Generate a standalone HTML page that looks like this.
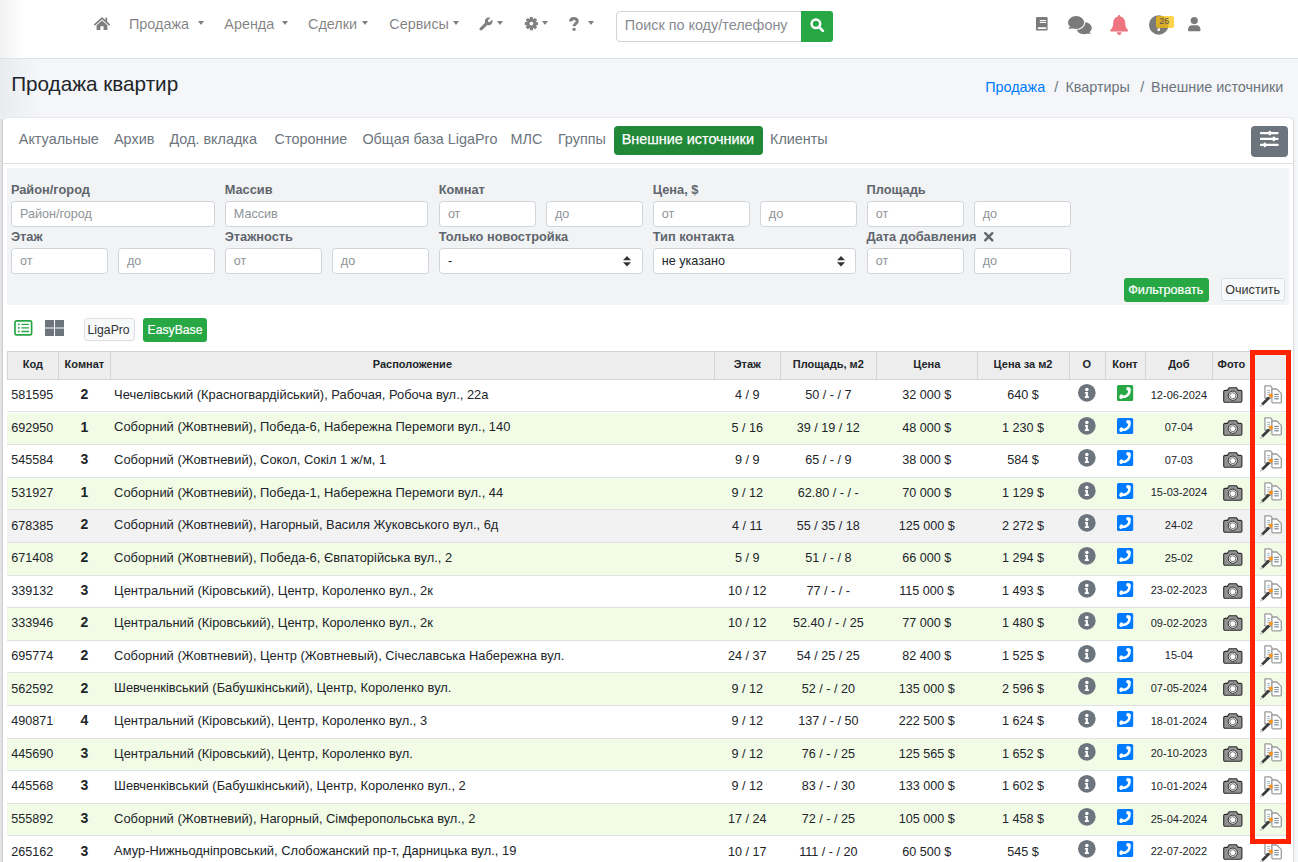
<!DOCTYPE html>
<html><head><meta charset="utf-8"><title>Продажа квартир</title><style>
*{box-sizing:border-box;margin:0;padding:0}
html,body{width:1298px;height:862px;overflow:hidden}
body{background:#f4f6f9;font-family:"Liberation Sans",sans-serif;position:relative;color:#212529}
.a{position:absolute;white-space:nowrap;line-height:1}
.nav{font-size:14.4px;color:rgba(0,0,0,.5)}
.caret{position:absolute;width:0;height:0;border-top:4.3px solid rgba(0,0,0,.5);border-left:3.8px solid transparent;border-right:3.8px solid transparent}
.tab{font-size:14.4px;color:#6c757d}
.lbl{font-size:12.8px;font-weight:bold;color:#5f666d}
.inp{position:absolute;background:#fff;border:1px solid #ced4da;border-radius:3.5px}
.ph{font-size:12.6px;color:#8e9398}
.hd{position:absolute;font-size:11px;font-weight:bold;line-height:1;white-space:nowrap;color:#212529}
svg{position:absolute;overflow:visible}
</style></head><body>
<div class="a" style="left:0;top:0;width:1298px;height:59px;background:#fff;border-bottom:1px solid #dee2e6"></div>
<div class="a" style="left:0;top:0;width:24px;height:58px;background:linear-gradient(to right,#f1f1f2,rgba(255,255,255,0))"></div>
<svg style="left:94.1px;top:17px" width="16" height="13" viewBox="0 0 16 13"><path d="M0.8 7.6 L8 1.2 L15.2 7.6" fill="none" stroke="#7f7f7f" stroke-width="1.7" stroke-linecap="round" stroke-linejoin="round"/><rect x="11.4" y="0.6" width="1.8" height="4.5" fill="#7f7f7f"/><path d="M2.6 8.2 L8 3.4 L13.4 8.2 L13.4 12.9 L9.6 12.9 L9.6 9.2 L6.4 9.2 L6.4 12.9 L2.6 12.9 Z" fill="#7f7f7f"/></svg>
<div class="a nav" style="left:129.0px;top:17.01px">Продажа</div>
<div class="caret" style="left:198.0px;top:21px"></div>
<div class="a nav" style="left:224.3px;top:17.01px">Аренда</div>
<div class="caret" style="left:282.0px;top:21px"></div>
<div class="a nav" style="left:308.0px;top:17.01px">Сделки</div>
<div class="caret" style="left:362.0px;top:21px"></div>
<div class="a nav" style="left:389.3px;top:17.01px">Сервисы</div>
<div class="caret" style="left:452.5px;top:21px"></div>
<svg style="left:478.9px;top:16.9px" width="14" height="14" viewBox="0 0 14 14"><path d="M13.2 2.6 L10.9 4.9 L9.1 4.9 L9.1 3.1 L11.4 0.8 C9.6 0.1 7.6 0.6 6.6 2 C5.8 3.1 5.7 4.5 6.1 5.7 L0.9 10.9 C0.3 11.5 0.3 12.5 0.9 13.1 C1.5 13.7 2.5 13.7 3.1 13.1 L8.3 7.9 C9.5 8.3 10.9 8.2 12 7.4 C13.4 6.4 13.9 4.4 13.2 2.6 Z" fill="#7f7f7f"/></svg>
<div class="caret" style="left:497.3px;top:21px"></div>
<svg style="left:524.5px;top:16.9px" width="13" height="13.2" viewBox="0 0 13 13.2"><rect x="4.800000000000001" y="0.0" width="3.2" height="3.4" rx="0.5" transform="rotate(0 6.4 6.6)" fill="#7f7f7f"/><rect x="4.800000000000001" y="0.0" width="3.2" height="3.4" rx="0.5" transform="rotate(45 6.4 6.6)" fill="#7f7f7f"/><rect x="4.800000000000001" y="0.0" width="3.2" height="3.4" rx="0.5" transform="rotate(90 6.4 6.6)" fill="#7f7f7f"/><rect x="4.800000000000001" y="0.0" width="3.2" height="3.4" rx="0.5" transform="rotate(135 6.4 6.6)" fill="#7f7f7f"/><rect x="4.800000000000001" y="0.0" width="3.2" height="3.4" rx="0.5" transform="rotate(180 6.4 6.6)" fill="#7f7f7f"/><rect x="4.800000000000001" y="0.0" width="3.2" height="3.4" rx="0.5" transform="rotate(225 6.4 6.6)" fill="#7f7f7f"/><rect x="4.800000000000001" y="0.0" width="3.2" height="3.4" rx="0.5" transform="rotate(270 6.4 6.6)" fill="#7f7f7f"/><rect x="4.800000000000001" y="0.0" width="3.2" height="3.4" rx="0.5" transform="rotate(315 6.4 6.6)" fill="#7f7f7f"/><circle cx="6.4" cy="6.6" r="4.9" fill="#7f7f7f"/><circle cx="6.4" cy="6.6" r="1.9" fill="#fff"/></svg>
<div class="caret" style="left:541.5px;top:21px"></div>
<svg style="left:569.1px;top:16.9px" width="9.8" height="13.7" viewBox="0 0 9.8 13.7"><path d="M1.6 4.6 C1.6 2.4 3.1 1.5 4.9 1.5 C6.8 1.5 8.3 2.6 8.3 4.3 C8.3 6.6 5.1 6.7 5.1 9.2" fill="none" stroke="#7f7f7f" stroke-width="3"/><rect x="3.5" y="10.9" width="3.1" height="2.8" rx="0.6" fill="#7f7f7f"/></svg>
<div class="caret" style="left:587.6px;top:21px"></div>
<div class="a" style="left:616px;top:11px;width:185.5px;height:31px;background:#fff;border:1px solid #ced4da;border-radius:4px 0 0 4px"></div>
<div class="a" style="left:624.8px;top:17.51px;font-size:14.4px;color:#878c92">Поиск по коду/телефону</div>
<div class="a" style="left:801px;top:11px;width:32px;height:31px;background:#28a745;border-radius:0 3px 3px 0"></div>
<svg style="left:809.5px;top:17.5px" width="15" height="15" viewBox="0 0 15 15"><circle cx="5.9" cy="5.8" r="4.3" fill="none" stroke="#fff" stroke-width="2.5"/><path d="M9 9 L12.9 12.9" stroke="#fff" stroke-width="2.7" stroke-linecap="round"/></svg>
<svg style="left:1036.2px;top:17px" width="11.6" height="13.5" viewBox="0 0 11.6 13.5"><rect x="0" y="0" width="11.6" height="13.5" rx="1.3" fill="#7a7a7a"/><rect x="3.8" y="3" width="6.2" height="1.1" fill="#fff"/><rect x="3.8" y="4.9" width="6.2" height="1.1" fill="#fff"/><rect x="1.8" y="10.3" width="8.5" height="1.8" rx="0.4" fill="#fff"/></svg>
<svg style="left:1067.5px;top:15.8px" width="24" height="18.5" viewBox="0 0 24 18.5"><ellipse cx="16" cy="12.1" rx="7.8" ry="6.1" fill="#7a7a7a"/><path d="M20.5 15.5 L23.3 18 L17.5 17.2 Z" fill="#7a7a7a"/><ellipse cx="8.1" cy="6.5" rx="9.3" ry="7.6" fill="#fff"/><ellipse cx="8.1" cy="6.5" rx="8.1" ry="6.5" fill="#7a7a7a"/><path d="M2 10.5 L0.3 13 L5.5 12.2 Z" fill="#7a7a7a"/></svg>
<svg style="left:1110.4px;top:15px" width="18.4" height="20" viewBox="0 0 18.4 20"><path d="M9.2 0 C10 0 10.4 0.6 10.4 1.4 C13.4 2 15.2 4.5 15.2 7.6 C15.2 11.5 16 13.3 18 15 C18.4 15.5 18.1 16.4 17.3 16.4 H1.1 C0.3 16.4 0 15.5 0.4 15 C2.4 13.3 3.2 11.5 3.2 7.6 C3.2 4.5 5 2 8 1.4 C8 0.6 8.4 0 9.2 0 Z" fill="#ee7480"/><path d="M6.8 17.3 H11.6 C11.6 18.7 10.5 20 9.2 20 C7.9 20 6.8 18.7 6.8 17.3 Z" fill="#ee7480"/></svg>
<svg style="left:1148.7px;top:15.2px" width="19.5" height="19.8" viewBox="0 0 19.5 19.8"><circle cx="9.75" cy="9.9" r="9.75" fill="#7a7a7a"/><rect x="8.5" y="13.4" width="2.5" height="2.5" fill="#fff"/></svg>
<div class="a" style="left:1156px;top:16.4px;width:18.3px;height:12px;background:rgba(255,193,7,.72);border-radius:2px"></div>
<div class="a" style="left:1159.2px;top:17.2px;font-size:9px;color:#555">26</div>
<svg style="left:1188.2px;top:16.7px" width="12.5" height="14.3" viewBox="0 0 12.5 14.3"><circle cx="6.25" cy="3.6" r="3.6" fill="#7a7a7a"/><path d="M0 12.6 C0 9.8 2 8.3 4 8.3 H8.5 C10.5 8.3 12.5 9.8 12.5 12.6 V13 C12.5 13.7 12 14.3 11.2 14.3 H1.3 C0.5 14.3 0 13.7 0 13 Z" fill="#7a7a7a"/></svg>
<div class="a" style="left:0;top:59px;width:40px;height:58px;background:linear-gradient(to right,#e9ecef,rgba(244,246,249,0))"></div>
<div class="a" style="left:11.2px;top:74.28px;font-size:20.7px;color:#212529">Продажа квартир</div>
<div class="a" style="left:985.2px;top:80.21px;font-size:14.4px;color:#007bff">Продажа</div>
<div class="a" style="left:1054.3px;top:80.21px;font-size:14.4px;color:#6c757d">/</div>
<div class="a" style="left:1065.4px;top:80.21px;font-size:14.4px;color:#6c757d">Квартиры</div>
<div class="a" style="left:1140.2px;top:80.21px;font-size:14.4px;color:#6c757d">/</div>
<div class="a" style="left:1151.1px;top:80.21px;font-size:14.4px;color:#6c757d">Внешние источники</div>
<div class="a" style="left:0;top:118px;width:3px;height:744px;background:#e5e6ea"></div>
<div class="a" style="left:2.5px;top:117.5px;width:1290.6px;height:760px;background:#fff;border-radius:4px;box-shadow:0 0 1px rgba(0,0,0,.25),0 1px 3px rgba(0,0,0,.2)"></div>
<div class="a" style="left:2.5px;top:163px;width:1290.6px;height:1px;background:rgba(0,0,0,.125)"></div>
<div class="a tab" style="left:18.8px;top:132.11px">Актуальные</div>
<div class="a tab" style="left:114.0px;top:132.11px">Архив</div>
<div class="a tab" style="left:169.4px;top:132.11px">Дод. вкладка</div>
<div class="a tab" style="left:274.6px;top:132.11px">Сторонние</div>
<div class="a tab" style="left:362.4px;top:132.11px">Общая база LigaPro</div>
<div class="a tab" style="left:510.5px;top:132.11px">МЛС</div>
<div class="a tab" style="left:557.9px;top:132.11px">Группы</div>
<div class="a tab" style="left:770.0px;top:132.11px">Клиенты</div>
<div class="a" style="left:613.9px;top:126.3px;width:148.8px;height:28.3px;background:#218838;border-radius:4px"></div>
<div class="a" style="left:621.7px;top:132.21px;font-size:14.4px;color:#fff;-webkit-text-stroke:0.25px #fff">Внешние источники</div>
<div class="a" style="left:1250.9px;top:126px;width:36.7px;height:30.6px;background:#6c757d;border-radius:4px"></div>
<svg style="left:1260px;top:131px" width="18.5" height="20" viewBox="0 0 18.5 20"><rect x="0" y="0.9" width="18.5" height="2.3" rx="0.6" fill="#fff"/><rect x="8.6" y="-0.3" width="2.4" height="4.7" rx="1.1" fill="#fff"/><rect x="0" y="6.8" width="18.5" height="2.3" rx="0.6" fill="#fff"/><rect x="12.6" y="5.6" width="2.4" height="4.7" rx="1.1" fill="#fff"/><rect x="0" y="12.7" width="18.5" height="2.3" rx="0.6" fill="#fff"/><rect x="3.6" y="11.5" width="2.4" height="4.7" rx="1.1" fill="#fff"/></svg>
<div class="a" style="left:6.7px;top:168px;width:1282.2px;height:136.8px;background:#f2f3f5"></div>
<div class="a lbl" style="left:10.9px;top:184.33px">Район/город</div>
<div class="a lbl" style="left:224.70000000000002px;top:184.33px">Массив</div>
<div class="a lbl" style="left:438.79999999999995px;top:184.33px">Комнат</div>
<div class="a lbl" style="left:652.6999999999999px;top:184.33px">Цена, $</div>
<div class="a lbl" style="left:866.6px;top:184.33px">Площадь</div>
<div class="a lbl" style="left:10.9px;top:231.33px">Этаж</div>
<div class="a lbl" style="left:224.70000000000002px;top:231.33px">Этажность</div>
<div class="a lbl" style="left:438.79999999999995px;top:231.33px">Только новостройка</div>
<div class="a lbl" style="left:652.6999999999999px;top:231.33px">Тип контакта</div>
<div class="a lbl" style="left:866.6px;top:231.33px">Дата добавления</div>
<svg style="left:984px;top:231.6px" width="9.5" height="9.5" viewBox="0 0 9.5 9.5"><path d="M1.2 1.2 L8.3 8.3 M8.3 1.2 L1.2 8.3" stroke="#5f666d" stroke-width="2.4" stroke-linecap="round"/></svg>
<div class="inp" style="left:10.9px;top:201.3px;width:203.8px;height:26.0px"></div>
<div class="a ph" style="left:20.0px;top:208.33px;color:#8e9398">Район/город</div>
<div class="inp" style="left:224.70000000000002px;top:201.3px;width:203.8px;height:26.0px"></div>
<div class="a ph" style="left:233.8px;top:208.33px;color:#8e9398">Массив</div>
<div class="inp" style="left:438.79999999999995px;top:201.3px;width:97.0px;height:26.0px"></div>
<div class="a ph" style="left:447.9px;top:208.33px;color:#8e9398">от</div>
<div class="inp" style="left:545.8px;top:201.3px;width:97.0px;height:26.0px"></div>
<div class="a ph" style="left:554.9px;top:208.33px;color:#8e9398">до</div>
<div class="inp" style="left:652.6999999999999px;top:201.3px;width:97.0px;height:26.0px"></div>
<div class="a ph" style="left:661.8px;top:208.33px;color:#8e9398">от</div>
<div class="inp" style="left:759.6999999999999px;top:201.3px;width:97.0px;height:26.0px"></div>
<div class="a ph" style="left:768.8px;top:208.33px;color:#8e9398">до</div>
<div class="inp" style="left:866.6px;top:201.3px;width:97.0px;height:26.0px"></div>
<div class="a ph" style="left:875.7px;top:208.33px;color:#8e9398">от</div>
<div class="inp" style="left:973.6px;top:201.3px;width:97.0px;height:26.0px"></div>
<div class="a ph" style="left:982.7px;top:208.33px;color:#8e9398">до</div>
<div class="inp" style="left:10.9px;top:248.2px;width:97.0px;height:26.0px"></div>
<div class="a ph" style="left:20.0px;top:255.33px;color:#8e9398">от</div>
<div class="inp" style="left:117.9px;top:248.2px;width:97.0px;height:26.0px"></div>
<div class="a ph" style="left:127.0px;top:255.33px;color:#8e9398">до</div>
<div class="inp" style="left:224.70000000000002px;top:248.2px;width:97.0px;height:26.0px"></div>
<div class="a ph" style="left:233.8px;top:255.33px;color:#8e9398">от</div>
<div class="inp" style="left:331.7px;top:248.2px;width:97.0px;height:26.0px"></div>
<div class="a ph" style="left:340.8px;top:255.33px;color:#8e9398">до</div>
<div class="inp" style="left:866.6px;top:248.2px;width:97.0px;height:26.0px"></div>
<div class="a ph" style="left:875.7px;top:255.33px;color:#8e9398">от</div>
<div class="inp" style="left:973.6px;top:248.2px;width:97.0px;height:26.0px"></div>
<div class="a ph" style="left:982.7px;top:255.33px;color:#8e9398">до</div>
<div class="inp" style="left:438.79999999999995px;top:248.2px;width:203.8px;height:26.0px"></div>
<div class="a ph" style="left:447.9px;top:255.33px;color:#212529">-</div>
<div class="inp" style="left:652.6999999999999px;top:248.2px;width:203.8px;height:26.0px"></div>
<div class="a ph" style="left:661.8px;top:255.33px;color:#212529">не указано</div>
<svg style="left:623.3px;top:255.8px" width="8" height="10.4" viewBox="0 0 8 10.4"><path d="M0 4.2 L4 0 L8 4.2 Z M0 6.2 L4 10.4 L8 6.2 Z" fill="#333"/></svg>
<svg style="left:837.1999999999999px;top:255.8px" width="8" height="10.4" viewBox="0 0 8 10.4"><path d="M0 4.2 L4 0 L8 4.2 Z M0 6.2 L4 10.4 L8 6.2 Z" fill="#333"/></svg>
<div class="a" style="left:1124px;top:278px;width:85px;height:23.6px;background:#28a745;border-radius:3px"></div>
<div class="a" style="left:1128.3px;top:283.83px;font-size:12.6px;color:#fff;-webkit-text-stroke:0.2px #fff">Фильтровать</div>
<div class="a" style="left:1221px;top:278.2px;width:63.5px;height:23.3px;background:#f8f9fa;border:1px solid #dcdfe2;border-radius:3px"></div>
<div class="a" style="left:1225.2px;top:283.83px;font-size:12.6px;color:#333">Очистить</div>
<svg style="left:14.4px;top:320px" width="18.6" height="15.7" viewBox="0 0 18.6 15.7"><rect x="1" y="0.8" width="16.6" height="14.1" rx="1.5" fill="none" stroke="#28a745" stroke-width="1.7"/><circle cx="4.8" cy="4.4" r="0.95" fill="#28a745"/><rect x="7.3" y="3.7" width="7.8" height="1.4" rx="0.6" fill="#28a745"/><circle cx="4.8" cy="7.9" r="0.95" fill="#28a745"/><rect x="7.3" y="7.2" width="7.8" height="1.4" rx="0.6" fill="#28a745"/><circle cx="4.8" cy="11.5" r="0.95" fill="#28a745"/><rect x="7.3" y="10.8" width="7.8" height="1.4" rx="0.6" fill="#28a745"/></svg>
<svg style="left:45px;top:320px" width="19" height="16" viewBox="0 0 19 16"><rect x="0" y="0" width="9" height="7.5" fill="#6c757d"/><rect x="10" y="0" width="9" height="7.5" fill="#6c757d"/><rect x="0" y="8.5" width="9" height="7.5" fill="#6c757d"/><rect x="10" y="8.5" width="9" height="7.5" fill="#6c757d"/></svg>
<div class="a" style="left:84.3px;top:318.3px;width:50.5px;height:23.1px;background:#f8f9fa;border:1px solid #dcdfe2;border-radius:3px"></div>
<div class="a" style="left:87.6px;top:323.77px;font-size:12.2px;color:#333">LigaPro</div>
<div class="a" style="left:143px;top:318px;width:64px;height:23.9px;background:#28a745;border-radius:3px"></div>
<div class="a" style="left:147.6px;top:323.77px;font-size:12.2px;color:#fff;-webkit-text-stroke:0.2px #fff">EasyBase</div>
<div class="a" style="left:7.4px;top:351.0px;width:1281.1999999999998px;height:29.30000000000001px;background:#ededed;border-top:1px solid #d4d4d4;border-bottom:1px solid #d4d4d4"></div>
<div class="a" style="left:7.4px;top:351.0px;width:1px;height:29.30000000000001px;background:#d4d4d4"></div>
<div class="a" style="left:58.4px;top:351.0px;width:1px;height:29.30000000000001px;background:#d4d4d4"></div>
<div class="a" style="left:110.4px;top:351.0px;width:1px;height:29.30000000000001px;background:#d4d4d4"></div>
<div class="a" style="left:714.4px;top:351.0px;width:1px;height:29.30000000000001px;background:#d4d4d4"></div>
<div class="a" style="left:780.3px;top:351.0px;width:1px;height:29.30000000000001px;background:#d4d4d4"></div>
<div class="a" style="left:876.3px;top:351.0px;width:1px;height:29.30000000000001px;background:#d4d4d4"></div>
<div class="a" style="left:977.3px;top:351.0px;width:1px;height:29.30000000000001px;background:#d4d4d4"></div>
<div class="a" style="left:1068.8px;top:351.0px;width:1px;height:29.30000000000001px;background:#d4d4d4"></div>
<div class="a" style="left:1104.6px;top:351.0px;width:1px;height:29.30000000000001px;background:#d4d4d4"></div>
<div class="a" style="left:1145.4px;top:351.0px;width:1px;height:29.30000000000001px;background:#d4d4d4"></div>
<div class="a" style="left:1212.4px;top:351.0px;width:1px;height:29.30000000000001px;background:#d4d4d4"></div>
<div class="a" style="left:1250.5px;top:351.0px;width:1px;height:29.30000000000001px;background:#d4d4d4"></div>
<div class="a" style="left:1288.6px;top:351.0px;width:1px;height:29.30000000000001px;background:#d4d4d4"></div>
<div class="hd" style="left:-27.1px;width:120px;text-align:center;top:359.29px">Код</div>
<div class="hd" style="left:24.400000000000006px;width:120px;text-align:center;top:359.29px">Комнат</div>
<div class="hd" style="left:352.4px;width:120px;text-align:center;top:359.29px">Расположение</div>
<div class="hd" style="left:687.3499999999999px;width:120px;text-align:center;top:359.29px">Этаж</div>
<div class="hd" style="left:768.3px;width:120px;text-align:center;top:359.29px">Площадь, м2</div>
<div class="hd" style="left:866.8px;width:120px;text-align:center;top:359.29px">Цена</div>
<div class="hd" style="left:963.05px;width:120px;text-align:center;top:359.29px">Цена за м2</div>
<div class="hd" style="left:1026.6999999999998px;width:120px;text-align:center;top:359.29px">О</div>
<div class="hd" style="left:1065.0px;width:120px;text-align:center;top:359.29px">Конт</div>
<div class="hd" style="left:1118.9px;width:120px;text-align:center;top:359.29px">Доб</div>
<div class="hd" style="left:1171.45px;width:120px;text-align:center;top:359.29px">Фото</div>
<div class="a" style="left:7.4px;top:380.30px;width:1281.1999999999998px;height:32.20px;background:#ffffff;border-bottom:1px solid #dee2e6"></div>
<div class="a" style="left:11.3px;top:389.13px;font-size:12.6px">581595</div>
<div class="a" style="left:64.4px;width:40px;text-align:center;top:387.05px;font-size:14px;font-weight:bold">2</div>
<div class="a" style="left:114.1px;top:388.88px;font-size:12.9px">Чечелівський (Красногвардійський), Рабочая, Робоча вул., 22а</div>
<div class="a" style="left:687.3499999999999px;width:120px;text-align:center;top:389.13px;font-size:12.6px">4 / 9</div>
<div class="a" style="left:768.3px;width:120px;text-align:center;top:389.13px;font-size:12.6px">50 / - / 7</div>
<div class="a" style="left:866.8px;width:120px;text-align:center;top:389.13px;font-size:12.6px">32 000 $</div>
<div class="a" style="left:963.05px;width:120px;text-align:center;top:389.13px;font-size:12.6px">640 $</div>
<div class="a" style="left:1128.9px;width:100px;text-align:center;top:389.59px;font-size:11px">12-06-2024</div>
<svg style="left:1077.8px;top:383.90px" width="17.7" height="17.7" viewBox="0 0 17.7 17.7"><circle cx="8.85" cy="8.85" r="8.85" fill="#6c757d"/><circle cx="8.85" cy="5.4" r="1.75" fill="#fff"/><path d="M6.9 7.9 H9.9 V12.3 H10.9 V13.9 H6.8 V12.3 H7.8 V9.4 H6.9 Z" fill="#fff"/></svg>
<svg style="left:1117px;top:384.90px" width="16.2" height="16" viewBox="0 0 16.2 16"><rect width="16.2" height="16" rx="1.6" fill="#28a745"/><path d="M12.2 4.2 C13.3 8.6 10.2 12.3 4.6 12.1" fill="none" stroke="#fff" stroke-width="2.5" stroke-linecap="round"/><ellipse cx="11.5" cy="4.0" rx="2.4" ry="1.8" transform="rotate(25 11.5 4)" fill="#fff"/><ellipse cx="4.2" cy="11.6" rx="1.8" ry="2.3" transform="rotate(25 4.2 11.6)" fill="#fff"/></svg>
<svg style="left:1223.1px;top:387.0px" width="19.6" height="16" viewBox="0 0 19.6 16"><path d="M6.1 0.7 H13.5 L15.1 3.4 H17.6 C18.4 3.4 18.9 4 18.9 4.8 V13.8 C18.9 14.6 18.4 15.2 17.6 15.2 H2 C1.2 15.2 0.7 14.6 0.7 13.8 V4.8 C0.7 4 1.2 3.4 2 3.4 H4.5 Z" fill="#929292" stroke="#2a2a2a" stroke-width="1.1" stroke-linejoin="round"/><circle cx="9.8" cy="8.7" r="4.6" fill="#fff" stroke="#2a2a2a" stroke-width="1"/><circle cx="9.8" cy="8.7" r="3" fill="#fff" stroke="#444" stroke-width="0.75"/></svg>
<svg style="left:1260px;top:384.6px" width="22" height="22" viewBox="0 0 22 22"><path d="M4.9 0.8 H10.3 L12 2.6 V13 H4.9 Z" fill="#fff" stroke="#9c9c9c" stroke-width="1.3" stroke-linejoin="round"/><path d="M11.9 4 H16.7 L21.3 8.4 V16.8 C21.3 17.4 20.9 17.8 20.3 17.8 H12.9 C12.3 17.8 11.9 17.4 11.9 16.8 Z" fill="#fff" stroke="#9c9c9c" stroke-width="1.3" stroke-linejoin="round"/><rect x="7.2" y="4.9" width="2.8" height="1.1" fill="#a9b6bf"/><rect x="7.2" y="6.9" width="2.8" height="1.1" fill="#a9c4d6"/><rect x="7.2" y="8.9" width="2.8" height="1.1" fill="#a9b6bf"/><rect x="14.2" y="8.8" width="4.6" height="1.2" fill="#7d8a96"/><rect x="14.2" y="11" width="4.6" height="1.2" fill="#8fa3b3"/><rect x="14.2" y="13.2" width="4.6" height="1.2" fill="#7d8a96"/><circle cx="10.9" cy="10.6" r="2.1" fill="#f7931e"/><path d="M8.1 11.4 L10.2 13.5 L3.2 20.2 L0.2 21.4 L1.3 18.4 Z" fill="#3c3c3c"/><path d="M1.3 18.4 L3.2 20.2 L0.2 21.4 Z" fill="#e6e6e6"/></svg>
<div class="a" style="left:7.4px;top:412.50px;width:1281.1999999999998px;height:32.61px;background:#f1fbe6;border-bottom:1px solid #dee2e6"></div>
<div class="a" style="left:11.3px;top:421.74px;font-size:12.6px">692950</div>
<div class="a" style="left:64.4px;width:40px;text-align:center;top:419.66px;font-size:14px;font-weight:bold">1</div>
<div class="a" style="left:114.1px;top:421.49px;font-size:12.9px">Соборний (Жовтневий), Победа-6, Набережна Перемоги вул., 140</div>
<div class="a" style="left:687.3499999999999px;width:120px;text-align:center;top:421.74px;font-size:12.6px">5 / 16</div>
<div class="a" style="left:768.3px;width:120px;text-align:center;top:421.74px;font-size:12.6px">39 / 19 / 12</div>
<div class="a" style="left:866.8px;width:120px;text-align:center;top:421.74px;font-size:12.6px">48 000 $</div>
<div class="a" style="left:963.05px;width:120px;text-align:center;top:421.74px;font-size:12.6px">1 230 $</div>
<div class="a" style="left:1128.9px;width:100px;text-align:center;top:422.20px;font-size:11px">07-04</div>
<svg style="left:1077.8px;top:416.51px" width="17.7" height="17.7" viewBox="0 0 17.7 17.7"><circle cx="8.85" cy="8.85" r="8.85" fill="#6c757d"/><circle cx="8.85" cy="5.4" r="1.75" fill="#fff"/><path d="M6.9 7.9 H9.9 V12.3 H10.9 V13.9 H6.8 V12.3 H7.8 V9.4 H6.9 Z" fill="#fff"/></svg>
<svg style="left:1117px;top:417.51px" width="16.2" height="16" viewBox="0 0 16.2 16"><rect width="16.2" height="16" rx="1.6" fill="#007bff"/><path d="M12.2 4.2 C13.3 8.6 10.2 12.3 4.6 12.1" fill="none" stroke="#fff" stroke-width="2.5" stroke-linecap="round"/><ellipse cx="11.5" cy="4.0" rx="2.4" ry="1.8" transform="rotate(25 11.5 4)" fill="#fff"/><ellipse cx="4.2" cy="11.6" rx="1.8" ry="2.3" transform="rotate(25 4.2 11.6)" fill="#fff"/></svg>
<svg style="left:1223.1px;top:419.61px" width="19.6" height="16" viewBox="0 0 19.6 16"><path d="M6.1 0.7 H13.5 L15.1 3.4 H17.6 C18.4 3.4 18.9 4 18.9 4.8 V13.8 C18.9 14.6 18.4 15.2 17.6 15.2 H2 C1.2 15.2 0.7 14.6 0.7 13.8 V4.8 C0.7 4 1.2 3.4 2 3.4 H4.5 Z" fill="#929292" stroke="#2a2a2a" stroke-width="1.1" stroke-linejoin="round"/><circle cx="9.8" cy="8.7" r="4.6" fill="#fff" stroke="#2a2a2a" stroke-width="1"/><circle cx="9.8" cy="8.7" r="3" fill="#fff" stroke="#444" stroke-width="0.75"/></svg>
<svg style="left:1260px;top:417.21000000000004px" width="22" height="22" viewBox="0 0 22 22"><path d="M4.9 0.8 H10.3 L12 2.6 V13 H4.9 Z" fill="#fff" stroke="#9c9c9c" stroke-width="1.3" stroke-linejoin="round"/><path d="M11.9 4 H16.7 L21.3 8.4 V16.8 C21.3 17.4 20.9 17.8 20.3 17.8 H12.9 C12.3 17.8 11.9 17.4 11.9 16.8 Z" fill="#fff" stroke="#9c9c9c" stroke-width="1.3" stroke-linejoin="round"/><rect x="7.2" y="4.9" width="2.8" height="1.1" fill="#a9b6bf"/><rect x="7.2" y="6.9" width="2.8" height="1.1" fill="#a9c4d6"/><rect x="7.2" y="8.9" width="2.8" height="1.1" fill="#a9b6bf"/><rect x="14.2" y="8.8" width="4.6" height="1.2" fill="#7d8a96"/><rect x="14.2" y="11" width="4.6" height="1.2" fill="#8fa3b3"/><rect x="14.2" y="13.2" width="4.6" height="1.2" fill="#7d8a96"/><circle cx="10.9" cy="10.6" r="2.1" fill="#f7931e"/><path d="M8.1 11.4 L10.2 13.5 L3.2 20.2 L0.2 21.4 L1.3 18.4 Z" fill="#3c3c3c"/><path d="M1.3 18.4 L3.2 20.2 L0.2 21.4 Z" fill="#e6e6e6"/></svg>
<div class="a" style="left:7.4px;top:445.11px;width:1281.1999999999998px;height:32.61px;background:#ffffff;border-bottom:1px solid #dee2e6"></div>
<div class="a" style="left:11.3px;top:454.35px;font-size:12.6px">545584</div>
<div class="a" style="left:64.4px;width:40px;text-align:center;top:452.27px;font-size:14px;font-weight:bold">3</div>
<div class="a" style="left:114.1px;top:454.10px;font-size:12.9px">Соборний (Жовтневий), Сокол, Сокіл 1 ж/м, 1</div>
<div class="a" style="left:687.3499999999999px;width:120px;text-align:center;top:454.35px;font-size:12.6px">9 / 9</div>
<div class="a" style="left:768.3px;width:120px;text-align:center;top:454.35px;font-size:12.6px">65 / - / 9</div>
<div class="a" style="left:866.8px;width:120px;text-align:center;top:454.35px;font-size:12.6px">38 000 $</div>
<div class="a" style="left:963.05px;width:120px;text-align:center;top:454.35px;font-size:12.6px">584 $</div>
<div class="a" style="left:1128.9px;width:100px;text-align:center;top:454.81px;font-size:11px">07-03</div>
<svg style="left:1077.8px;top:449.12px" width="17.7" height="17.7" viewBox="0 0 17.7 17.7"><circle cx="8.85" cy="8.85" r="8.85" fill="#6c757d"/><circle cx="8.85" cy="5.4" r="1.75" fill="#fff"/><path d="M6.9 7.9 H9.9 V12.3 H10.9 V13.9 H6.8 V12.3 H7.8 V9.4 H6.9 Z" fill="#fff"/></svg>
<svg style="left:1117px;top:450.12px" width="16.2" height="16" viewBox="0 0 16.2 16"><rect width="16.2" height="16" rx="1.6" fill="#007bff"/><path d="M12.2 4.2 C13.3 8.6 10.2 12.3 4.6 12.1" fill="none" stroke="#fff" stroke-width="2.5" stroke-linecap="round"/><ellipse cx="11.5" cy="4.0" rx="2.4" ry="1.8" transform="rotate(25 11.5 4)" fill="#fff"/><ellipse cx="4.2" cy="11.6" rx="1.8" ry="2.3" transform="rotate(25 4.2 11.6)" fill="#fff"/></svg>
<svg style="left:1223.1px;top:452.22px" width="19.6" height="16" viewBox="0 0 19.6 16"><path d="M6.1 0.7 H13.5 L15.1 3.4 H17.6 C18.4 3.4 18.9 4 18.9 4.8 V13.8 C18.9 14.6 18.4 15.2 17.6 15.2 H2 C1.2 15.2 0.7 14.6 0.7 13.8 V4.8 C0.7 4 1.2 3.4 2 3.4 H4.5 Z" fill="#929292" stroke="#2a2a2a" stroke-width="1.1" stroke-linejoin="round"/><circle cx="9.8" cy="8.7" r="4.6" fill="#fff" stroke="#2a2a2a" stroke-width="1"/><circle cx="9.8" cy="8.7" r="3" fill="#fff" stroke="#444" stroke-width="0.75"/></svg>
<svg style="left:1260px;top:449.82000000000005px" width="22" height="22" viewBox="0 0 22 22"><path d="M4.9 0.8 H10.3 L12 2.6 V13 H4.9 Z" fill="#fff" stroke="#9c9c9c" stroke-width="1.3" stroke-linejoin="round"/><path d="M11.9 4 H16.7 L21.3 8.4 V16.8 C21.3 17.4 20.9 17.8 20.3 17.8 H12.9 C12.3 17.8 11.9 17.4 11.9 16.8 Z" fill="#fff" stroke="#9c9c9c" stroke-width="1.3" stroke-linejoin="round"/><rect x="7.2" y="4.9" width="2.8" height="1.1" fill="#a9b6bf"/><rect x="7.2" y="6.9" width="2.8" height="1.1" fill="#a9c4d6"/><rect x="7.2" y="8.9" width="2.8" height="1.1" fill="#a9b6bf"/><rect x="14.2" y="8.8" width="4.6" height="1.2" fill="#7d8a96"/><rect x="14.2" y="11" width="4.6" height="1.2" fill="#8fa3b3"/><rect x="14.2" y="13.2" width="4.6" height="1.2" fill="#7d8a96"/><circle cx="10.9" cy="10.6" r="2.1" fill="#f7931e"/><path d="M8.1 11.4 L10.2 13.5 L3.2 20.2 L0.2 21.4 L1.3 18.4 Z" fill="#3c3c3c"/><path d="M1.3 18.4 L3.2 20.2 L0.2 21.4 Z" fill="#e6e6e6"/></svg>
<div class="a" style="left:7.4px;top:477.72px;width:1281.1999999999998px;height:32.61px;background:#f1fbe6;border-bottom:1px solid #dee2e6"></div>
<div class="a" style="left:11.3px;top:486.96px;font-size:12.6px">531927</div>
<div class="a" style="left:64.4px;width:40px;text-align:center;top:484.88px;font-size:14px;font-weight:bold">1</div>
<div class="a" style="left:114.1px;top:486.71px;font-size:12.9px">Соборний (Жовтневий), Победа-1, Набережна Перемоги вул., 44</div>
<div class="a" style="left:687.3499999999999px;width:120px;text-align:center;top:486.96px;font-size:12.6px">9 / 12</div>
<div class="a" style="left:768.3px;width:120px;text-align:center;top:486.96px;font-size:12.6px">62.80 / - / -</div>
<div class="a" style="left:866.8px;width:120px;text-align:center;top:486.96px;font-size:12.6px">70 000 $</div>
<div class="a" style="left:963.05px;width:120px;text-align:center;top:486.96px;font-size:12.6px">1 129 $</div>
<div class="a" style="left:1128.9px;width:100px;text-align:center;top:487.42px;font-size:11px">15-03-2024</div>
<svg style="left:1077.8px;top:481.73px" width="17.7" height="17.7" viewBox="0 0 17.7 17.7"><circle cx="8.85" cy="8.85" r="8.85" fill="#6c757d"/><circle cx="8.85" cy="5.4" r="1.75" fill="#fff"/><path d="M6.9 7.9 H9.9 V12.3 H10.9 V13.9 H6.8 V12.3 H7.8 V9.4 H6.9 Z" fill="#fff"/></svg>
<svg style="left:1117px;top:482.73px" width="16.2" height="16" viewBox="0 0 16.2 16"><rect width="16.2" height="16" rx="1.6" fill="#007bff"/><path d="M12.2 4.2 C13.3 8.6 10.2 12.3 4.6 12.1" fill="none" stroke="#fff" stroke-width="2.5" stroke-linecap="round"/><ellipse cx="11.5" cy="4.0" rx="2.4" ry="1.8" transform="rotate(25 11.5 4)" fill="#fff"/><ellipse cx="4.2" cy="11.6" rx="1.8" ry="2.3" transform="rotate(25 4.2 11.6)" fill="#fff"/></svg>
<svg style="left:1223.1px;top:484.83px" width="19.6" height="16" viewBox="0 0 19.6 16"><path d="M6.1 0.7 H13.5 L15.1 3.4 H17.6 C18.4 3.4 18.9 4 18.9 4.8 V13.8 C18.9 14.6 18.4 15.2 17.6 15.2 H2 C1.2 15.2 0.7 14.6 0.7 13.8 V4.8 C0.7 4 1.2 3.4 2 3.4 H4.5 Z" fill="#929292" stroke="#2a2a2a" stroke-width="1.1" stroke-linejoin="round"/><circle cx="9.8" cy="8.7" r="4.6" fill="#fff" stroke="#2a2a2a" stroke-width="1"/><circle cx="9.8" cy="8.7" r="3" fill="#fff" stroke="#444" stroke-width="0.75"/></svg>
<svg style="left:1260px;top:482.43px" width="22" height="22" viewBox="0 0 22 22"><path d="M4.9 0.8 H10.3 L12 2.6 V13 H4.9 Z" fill="#fff" stroke="#9c9c9c" stroke-width="1.3" stroke-linejoin="round"/><path d="M11.9 4 H16.7 L21.3 8.4 V16.8 C21.3 17.4 20.9 17.8 20.3 17.8 H12.9 C12.3 17.8 11.9 17.4 11.9 16.8 Z" fill="#fff" stroke="#9c9c9c" stroke-width="1.3" stroke-linejoin="round"/><rect x="7.2" y="4.9" width="2.8" height="1.1" fill="#a9b6bf"/><rect x="7.2" y="6.9" width="2.8" height="1.1" fill="#a9c4d6"/><rect x="7.2" y="8.9" width="2.8" height="1.1" fill="#a9b6bf"/><rect x="14.2" y="8.8" width="4.6" height="1.2" fill="#7d8a96"/><rect x="14.2" y="11" width="4.6" height="1.2" fill="#8fa3b3"/><rect x="14.2" y="13.2" width="4.6" height="1.2" fill="#7d8a96"/><circle cx="10.9" cy="10.6" r="2.1" fill="#f7931e"/><path d="M8.1 11.4 L10.2 13.5 L3.2 20.2 L0.2 21.4 L1.3 18.4 Z" fill="#3c3c3c"/><path d="M1.3 18.4 L3.2 20.2 L0.2 21.4 Z" fill="#e6e6e6"/></svg>
<div class="a" style="left:7.4px;top:510.33px;width:1281.1999999999998px;height:32.61px;background:#f2f2f3;border-bottom:1px solid #dee2e6"></div>
<div class="a" style="left:11.3px;top:519.57px;font-size:12.6px">678385</div>
<div class="a" style="left:64.4px;width:40px;text-align:center;top:517.49px;font-size:14px;font-weight:bold">2</div>
<div class="a" style="left:114.1px;top:519.32px;font-size:12.9px">Соборний (Жовтневий), Нагорный, Василя Жуковського вул., 6д</div>
<div class="a" style="left:687.3499999999999px;width:120px;text-align:center;top:519.57px;font-size:12.6px">4 / 11</div>
<div class="a" style="left:768.3px;width:120px;text-align:center;top:519.57px;font-size:12.6px">55 / 35 / 18</div>
<div class="a" style="left:866.8px;width:120px;text-align:center;top:519.57px;font-size:12.6px">125 000 $</div>
<div class="a" style="left:963.05px;width:120px;text-align:center;top:519.57px;font-size:12.6px">2 272 $</div>
<div class="a" style="left:1128.9px;width:100px;text-align:center;top:520.03px;font-size:11px">24-02</div>
<svg style="left:1077.8px;top:514.34px" width="17.7" height="17.7" viewBox="0 0 17.7 17.7"><circle cx="8.85" cy="8.85" r="8.85" fill="#6c757d"/><circle cx="8.85" cy="5.4" r="1.75" fill="#fff"/><path d="M6.9 7.9 H9.9 V12.3 H10.9 V13.9 H6.8 V12.3 H7.8 V9.4 H6.9 Z" fill="#fff"/></svg>
<svg style="left:1117px;top:515.34px" width="16.2" height="16" viewBox="0 0 16.2 16"><rect width="16.2" height="16" rx="1.6" fill="#007bff"/><path d="M12.2 4.2 C13.3 8.6 10.2 12.3 4.6 12.1" fill="none" stroke="#fff" stroke-width="2.5" stroke-linecap="round"/><ellipse cx="11.5" cy="4.0" rx="2.4" ry="1.8" transform="rotate(25 11.5 4)" fill="#fff"/><ellipse cx="4.2" cy="11.6" rx="1.8" ry="2.3" transform="rotate(25 4.2 11.6)" fill="#fff"/></svg>
<svg style="left:1223.1px;top:517.44px" width="19.6" height="16" viewBox="0 0 19.6 16"><path d="M6.1 0.7 H13.5 L15.1 3.4 H17.6 C18.4 3.4 18.9 4 18.9 4.8 V13.8 C18.9 14.6 18.4 15.2 17.6 15.2 H2 C1.2 15.2 0.7 14.6 0.7 13.8 V4.8 C0.7 4 1.2 3.4 2 3.4 H4.5 Z" fill="#929292" stroke="#2a2a2a" stroke-width="1.1" stroke-linejoin="round"/><circle cx="9.8" cy="8.7" r="4.6" fill="#fff" stroke="#2a2a2a" stroke-width="1"/><circle cx="9.8" cy="8.7" r="3" fill="#fff" stroke="#444" stroke-width="0.75"/></svg>
<svg style="left:1260px;top:515.0400000000001px" width="22" height="22" viewBox="0 0 22 22"><path d="M4.9 0.8 H10.3 L12 2.6 V13 H4.9 Z" fill="#fff" stroke="#9c9c9c" stroke-width="1.3" stroke-linejoin="round"/><path d="M11.9 4 H16.7 L21.3 8.4 V16.8 C21.3 17.4 20.9 17.8 20.3 17.8 H12.9 C12.3 17.8 11.9 17.4 11.9 16.8 Z" fill="#fff" stroke="#9c9c9c" stroke-width="1.3" stroke-linejoin="round"/><rect x="7.2" y="4.9" width="2.8" height="1.1" fill="#a9b6bf"/><rect x="7.2" y="6.9" width="2.8" height="1.1" fill="#a9c4d6"/><rect x="7.2" y="8.9" width="2.8" height="1.1" fill="#a9b6bf"/><rect x="14.2" y="8.8" width="4.6" height="1.2" fill="#7d8a96"/><rect x="14.2" y="11" width="4.6" height="1.2" fill="#8fa3b3"/><rect x="14.2" y="13.2" width="4.6" height="1.2" fill="#7d8a96"/><circle cx="10.9" cy="10.6" r="2.1" fill="#f7931e"/><path d="M8.1 11.4 L10.2 13.5 L3.2 20.2 L0.2 21.4 L1.3 18.4 Z" fill="#3c3c3c"/><path d="M1.3 18.4 L3.2 20.2 L0.2 21.4 Z" fill="#e6e6e6"/></svg>
<div class="a" style="left:7.4px;top:542.94px;width:1281.1999999999998px;height:32.61px;background:#f1fbe6;border-bottom:1px solid #dee2e6"></div>
<div class="a" style="left:11.3px;top:552.18px;font-size:12.6px">671408</div>
<div class="a" style="left:64.4px;width:40px;text-align:center;top:550.10px;font-size:14px;font-weight:bold">2</div>
<div class="a" style="left:114.1px;top:551.93px;font-size:12.9px">Соборний (Жовтневий), Победа-6, Євпаторійська вул., 2</div>
<div class="a" style="left:687.3499999999999px;width:120px;text-align:center;top:552.18px;font-size:12.6px">5 / 9</div>
<div class="a" style="left:768.3px;width:120px;text-align:center;top:552.18px;font-size:12.6px">51 / - / 8</div>
<div class="a" style="left:866.8px;width:120px;text-align:center;top:552.18px;font-size:12.6px">66 000 $</div>
<div class="a" style="left:963.05px;width:120px;text-align:center;top:552.18px;font-size:12.6px">1 294 $</div>
<div class="a" style="left:1128.9px;width:100px;text-align:center;top:552.64px;font-size:11px">25-02</div>
<svg style="left:1077.8px;top:546.95px" width="17.7" height="17.7" viewBox="0 0 17.7 17.7"><circle cx="8.85" cy="8.85" r="8.85" fill="#6c757d"/><circle cx="8.85" cy="5.4" r="1.75" fill="#fff"/><path d="M6.9 7.9 H9.9 V12.3 H10.9 V13.9 H6.8 V12.3 H7.8 V9.4 H6.9 Z" fill="#fff"/></svg>
<svg style="left:1117px;top:547.95px" width="16.2" height="16" viewBox="0 0 16.2 16"><rect width="16.2" height="16" rx="1.6" fill="#007bff"/><path d="M12.2 4.2 C13.3 8.6 10.2 12.3 4.6 12.1" fill="none" stroke="#fff" stroke-width="2.5" stroke-linecap="round"/><ellipse cx="11.5" cy="4.0" rx="2.4" ry="1.8" transform="rotate(25 11.5 4)" fill="#fff"/><ellipse cx="4.2" cy="11.6" rx="1.8" ry="2.3" transform="rotate(25 4.2 11.6)" fill="#fff"/></svg>
<svg style="left:1223.1px;top:550.05px" width="19.6" height="16" viewBox="0 0 19.6 16"><path d="M6.1 0.7 H13.5 L15.1 3.4 H17.6 C18.4 3.4 18.9 4 18.9 4.8 V13.8 C18.9 14.6 18.4 15.2 17.6 15.2 H2 C1.2 15.2 0.7 14.6 0.7 13.8 V4.8 C0.7 4 1.2 3.4 2 3.4 H4.5 Z" fill="#929292" stroke="#2a2a2a" stroke-width="1.1" stroke-linejoin="round"/><circle cx="9.8" cy="8.7" r="4.6" fill="#fff" stroke="#2a2a2a" stroke-width="1"/><circle cx="9.8" cy="8.7" r="3" fill="#fff" stroke="#444" stroke-width="0.75"/></svg>
<svg style="left:1260px;top:547.6499999999999px" width="22" height="22" viewBox="0 0 22 22"><path d="M4.9 0.8 H10.3 L12 2.6 V13 H4.9 Z" fill="#fff" stroke="#9c9c9c" stroke-width="1.3" stroke-linejoin="round"/><path d="M11.9 4 H16.7 L21.3 8.4 V16.8 C21.3 17.4 20.9 17.8 20.3 17.8 H12.9 C12.3 17.8 11.9 17.4 11.9 16.8 Z" fill="#fff" stroke="#9c9c9c" stroke-width="1.3" stroke-linejoin="round"/><rect x="7.2" y="4.9" width="2.8" height="1.1" fill="#a9b6bf"/><rect x="7.2" y="6.9" width="2.8" height="1.1" fill="#a9c4d6"/><rect x="7.2" y="8.9" width="2.8" height="1.1" fill="#a9b6bf"/><rect x="14.2" y="8.8" width="4.6" height="1.2" fill="#7d8a96"/><rect x="14.2" y="11" width="4.6" height="1.2" fill="#8fa3b3"/><rect x="14.2" y="13.2" width="4.6" height="1.2" fill="#7d8a96"/><circle cx="10.9" cy="10.6" r="2.1" fill="#f7931e"/><path d="M8.1 11.4 L10.2 13.5 L3.2 20.2 L0.2 21.4 L1.3 18.4 Z" fill="#3c3c3c"/><path d="M1.3 18.4 L3.2 20.2 L0.2 21.4 Z" fill="#e6e6e6"/></svg>
<div class="a" style="left:7.4px;top:575.55px;width:1281.1999999999998px;height:32.61px;background:#ffffff;border-bottom:1px solid #dee2e6"></div>
<div class="a" style="left:11.3px;top:584.79px;font-size:12.6px">339132</div>
<div class="a" style="left:64.4px;width:40px;text-align:center;top:582.71px;font-size:14px;font-weight:bold">3</div>
<div class="a" style="left:114.1px;top:584.54px;font-size:12.9px">Центральний (Кіровський), Центр, Короленко вул., 2к</div>
<div class="a" style="left:687.3499999999999px;width:120px;text-align:center;top:584.79px;font-size:12.6px">10 / 12</div>
<div class="a" style="left:768.3px;width:120px;text-align:center;top:584.79px;font-size:12.6px">77 / - / -</div>
<div class="a" style="left:866.8px;width:120px;text-align:center;top:584.79px;font-size:12.6px">115 000 $</div>
<div class="a" style="left:963.05px;width:120px;text-align:center;top:584.79px;font-size:12.6px">1 493 $</div>
<div class="a" style="left:1128.9px;width:100px;text-align:center;top:585.25px;font-size:11px">23-02-2023</div>
<svg style="left:1077.8px;top:579.56px" width="17.7" height="17.7" viewBox="0 0 17.7 17.7"><circle cx="8.85" cy="8.85" r="8.85" fill="#6c757d"/><circle cx="8.85" cy="5.4" r="1.75" fill="#fff"/><path d="M6.9 7.9 H9.9 V12.3 H10.9 V13.9 H6.8 V12.3 H7.8 V9.4 H6.9 Z" fill="#fff"/></svg>
<svg style="left:1117px;top:580.56px" width="16.2" height="16" viewBox="0 0 16.2 16"><rect width="16.2" height="16" rx="1.6" fill="#007bff"/><path d="M12.2 4.2 C13.3 8.6 10.2 12.3 4.6 12.1" fill="none" stroke="#fff" stroke-width="2.5" stroke-linecap="round"/><ellipse cx="11.5" cy="4.0" rx="2.4" ry="1.8" transform="rotate(25 11.5 4)" fill="#fff"/><ellipse cx="4.2" cy="11.6" rx="1.8" ry="2.3" transform="rotate(25 4.2 11.6)" fill="#fff"/></svg>
<svg style="left:1223.1px;top:582.66px" width="19.6" height="16" viewBox="0 0 19.6 16"><path d="M6.1 0.7 H13.5 L15.1 3.4 H17.6 C18.4 3.4 18.9 4 18.9 4.8 V13.8 C18.9 14.6 18.4 15.2 17.6 15.2 H2 C1.2 15.2 0.7 14.6 0.7 13.8 V4.8 C0.7 4 1.2 3.4 2 3.4 H4.5 Z" fill="#929292" stroke="#2a2a2a" stroke-width="1.1" stroke-linejoin="round"/><circle cx="9.8" cy="8.7" r="4.6" fill="#fff" stroke="#2a2a2a" stroke-width="1"/><circle cx="9.8" cy="8.7" r="3" fill="#fff" stroke="#444" stroke-width="0.75"/></svg>
<svg style="left:1260px;top:580.2599999999999px" width="22" height="22" viewBox="0 0 22 22"><path d="M4.9 0.8 H10.3 L12 2.6 V13 H4.9 Z" fill="#fff" stroke="#9c9c9c" stroke-width="1.3" stroke-linejoin="round"/><path d="M11.9 4 H16.7 L21.3 8.4 V16.8 C21.3 17.4 20.9 17.8 20.3 17.8 H12.9 C12.3 17.8 11.9 17.4 11.9 16.8 Z" fill="#fff" stroke="#9c9c9c" stroke-width="1.3" stroke-linejoin="round"/><rect x="7.2" y="4.9" width="2.8" height="1.1" fill="#a9b6bf"/><rect x="7.2" y="6.9" width="2.8" height="1.1" fill="#a9c4d6"/><rect x="7.2" y="8.9" width="2.8" height="1.1" fill="#a9b6bf"/><rect x="14.2" y="8.8" width="4.6" height="1.2" fill="#7d8a96"/><rect x="14.2" y="11" width="4.6" height="1.2" fill="#8fa3b3"/><rect x="14.2" y="13.2" width="4.6" height="1.2" fill="#7d8a96"/><circle cx="10.9" cy="10.6" r="2.1" fill="#f7931e"/><path d="M8.1 11.4 L10.2 13.5 L3.2 20.2 L0.2 21.4 L1.3 18.4 Z" fill="#3c3c3c"/><path d="M1.3 18.4 L3.2 20.2 L0.2 21.4 Z" fill="#e6e6e6"/></svg>
<div class="a" style="left:7.4px;top:608.16px;width:1281.1999999999998px;height:32.61px;background:#f1fbe6;border-bottom:1px solid #dee2e6"></div>
<div class="a" style="left:11.3px;top:617.40px;font-size:12.6px">333946</div>
<div class="a" style="left:64.4px;width:40px;text-align:center;top:615.32px;font-size:14px;font-weight:bold">2</div>
<div class="a" style="left:114.1px;top:617.15px;font-size:12.9px">Центральний (Кіровський), Центр, Короленко вул., 2к</div>
<div class="a" style="left:687.3499999999999px;width:120px;text-align:center;top:617.40px;font-size:12.6px">10 / 12</div>
<div class="a" style="left:768.3px;width:120px;text-align:center;top:617.40px;font-size:12.6px">52.40 / - / 25</div>
<div class="a" style="left:866.8px;width:120px;text-align:center;top:617.40px;font-size:12.6px">77 000 $</div>
<div class="a" style="left:963.05px;width:120px;text-align:center;top:617.40px;font-size:12.6px">1 480 $</div>
<div class="a" style="left:1128.9px;width:100px;text-align:center;top:617.86px;font-size:11px">09-02-2023</div>
<svg style="left:1077.8px;top:612.17px" width="17.7" height="17.7" viewBox="0 0 17.7 17.7"><circle cx="8.85" cy="8.85" r="8.85" fill="#6c757d"/><circle cx="8.85" cy="5.4" r="1.75" fill="#fff"/><path d="M6.9 7.9 H9.9 V12.3 H10.9 V13.9 H6.8 V12.3 H7.8 V9.4 H6.9 Z" fill="#fff"/></svg>
<svg style="left:1117px;top:613.17px" width="16.2" height="16" viewBox="0 0 16.2 16"><rect width="16.2" height="16" rx="1.6" fill="#007bff"/><path d="M12.2 4.2 C13.3 8.6 10.2 12.3 4.6 12.1" fill="none" stroke="#fff" stroke-width="2.5" stroke-linecap="round"/><ellipse cx="11.5" cy="4.0" rx="2.4" ry="1.8" transform="rotate(25 11.5 4)" fill="#fff"/><ellipse cx="4.2" cy="11.6" rx="1.8" ry="2.3" transform="rotate(25 4.2 11.6)" fill="#fff"/></svg>
<svg style="left:1223.1px;top:615.27px" width="19.6" height="16" viewBox="0 0 19.6 16"><path d="M6.1 0.7 H13.5 L15.1 3.4 H17.6 C18.4 3.4 18.9 4 18.9 4.8 V13.8 C18.9 14.6 18.4 15.2 17.6 15.2 H2 C1.2 15.2 0.7 14.6 0.7 13.8 V4.8 C0.7 4 1.2 3.4 2 3.4 H4.5 Z" fill="#929292" stroke="#2a2a2a" stroke-width="1.1" stroke-linejoin="round"/><circle cx="9.8" cy="8.7" r="4.6" fill="#fff" stroke="#2a2a2a" stroke-width="1"/><circle cx="9.8" cy="8.7" r="3" fill="#fff" stroke="#444" stroke-width="0.75"/></svg>
<svg style="left:1260px;top:612.8699999999999px" width="22" height="22" viewBox="0 0 22 22"><path d="M4.9 0.8 H10.3 L12 2.6 V13 H4.9 Z" fill="#fff" stroke="#9c9c9c" stroke-width="1.3" stroke-linejoin="round"/><path d="M11.9 4 H16.7 L21.3 8.4 V16.8 C21.3 17.4 20.9 17.8 20.3 17.8 H12.9 C12.3 17.8 11.9 17.4 11.9 16.8 Z" fill="#fff" stroke="#9c9c9c" stroke-width="1.3" stroke-linejoin="round"/><rect x="7.2" y="4.9" width="2.8" height="1.1" fill="#a9b6bf"/><rect x="7.2" y="6.9" width="2.8" height="1.1" fill="#a9c4d6"/><rect x="7.2" y="8.9" width="2.8" height="1.1" fill="#a9b6bf"/><rect x="14.2" y="8.8" width="4.6" height="1.2" fill="#7d8a96"/><rect x="14.2" y="11" width="4.6" height="1.2" fill="#8fa3b3"/><rect x="14.2" y="13.2" width="4.6" height="1.2" fill="#7d8a96"/><circle cx="10.9" cy="10.6" r="2.1" fill="#f7931e"/><path d="M8.1 11.4 L10.2 13.5 L3.2 20.2 L0.2 21.4 L1.3 18.4 Z" fill="#3c3c3c"/><path d="M1.3 18.4 L3.2 20.2 L0.2 21.4 Z" fill="#e6e6e6"/></svg>
<div class="a" style="left:7.4px;top:640.77px;width:1281.1999999999998px;height:32.61px;background:#ffffff;border-bottom:1px solid #dee2e6"></div>
<div class="a" style="left:11.3px;top:650.01px;font-size:12.6px">695774</div>
<div class="a" style="left:64.4px;width:40px;text-align:center;top:647.93px;font-size:14px;font-weight:bold">2</div>
<div class="a" style="left:114.1px;top:649.76px;font-size:12.9px">Соборний (Жовтневий), Центр (Жовтневый), Січеславська Набережна вул.</div>
<div class="a" style="left:687.3499999999999px;width:120px;text-align:center;top:650.01px;font-size:12.6px">24 / 37</div>
<div class="a" style="left:768.3px;width:120px;text-align:center;top:650.01px;font-size:12.6px">54 / 25 / 25</div>
<div class="a" style="left:866.8px;width:120px;text-align:center;top:650.01px;font-size:12.6px">82 400 $</div>
<div class="a" style="left:963.05px;width:120px;text-align:center;top:650.01px;font-size:12.6px">1 525 $</div>
<div class="a" style="left:1128.9px;width:100px;text-align:center;top:650.47px;font-size:11px">15-04</div>
<svg style="left:1077.8px;top:644.78px" width="17.7" height="17.7" viewBox="0 0 17.7 17.7"><circle cx="8.85" cy="8.85" r="8.85" fill="#6c757d"/><circle cx="8.85" cy="5.4" r="1.75" fill="#fff"/><path d="M6.9 7.9 H9.9 V12.3 H10.9 V13.9 H6.8 V12.3 H7.8 V9.4 H6.9 Z" fill="#fff"/></svg>
<svg style="left:1117px;top:645.78px" width="16.2" height="16" viewBox="0 0 16.2 16"><rect width="16.2" height="16" rx="1.6" fill="#007bff"/><path d="M12.2 4.2 C13.3 8.6 10.2 12.3 4.6 12.1" fill="none" stroke="#fff" stroke-width="2.5" stroke-linecap="round"/><ellipse cx="11.5" cy="4.0" rx="2.4" ry="1.8" transform="rotate(25 11.5 4)" fill="#fff"/><ellipse cx="4.2" cy="11.6" rx="1.8" ry="2.3" transform="rotate(25 4.2 11.6)" fill="#fff"/></svg>
<svg style="left:1223.1px;top:647.88px" width="19.6" height="16" viewBox="0 0 19.6 16"><path d="M6.1 0.7 H13.5 L15.1 3.4 H17.6 C18.4 3.4 18.9 4 18.9 4.8 V13.8 C18.9 14.6 18.4 15.2 17.6 15.2 H2 C1.2 15.2 0.7 14.6 0.7 13.8 V4.8 C0.7 4 1.2 3.4 2 3.4 H4.5 Z" fill="#929292" stroke="#2a2a2a" stroke-width="1.1" stroke-linejoin="round"/><circle cx="9.8" cy="8.7" r="4.6" fill="#fff" stroke="#2a2a2a" stroke-width="1"/><circle cx="9.8" cy="8.7" r="3" fill="#fff" stroke="#444" stroke-width="0.75"/></svg>
<svg style="left:1260px;top:645.4799999999999px" width="22" height="22" viewBox="0 0 22 22"><path d="M4.9 0.8 H10.3 L12 2.6 V13 H4.9 Z" fill="#fff" stroke="#9c9c9c" stroke-width="1.3" stroke-linejoin="round"/><path d="M11.9 4 H16.7 L21.3 8.4 V16.8 C21.3 17.4 20.9 17.8 20.3 17.8 H12.9 C12.3 17.8 11.9 17.4 11.9 16.8 Z" fill="#fff" stroke="#9c9c9c" stroke-width="1.3" stroke-linejoin="round"/><rect x="7.2" y="4.9" width="2.8" height="1.1" fill="#a9b6bf"/><rect x="7.2" y="6.9" width="2.8" height="1.1" fill="#a9c4d6"/><rect x="7.2" y="8.9" width="2.8" height="1.1" fill="#a9b6bf"/><rect x="14.2" y="8.8" width="4.6" height="1.2" fill="#7d8a96"/><rect x="14.2" y="11" width="4.6" height="1.2" fill="#8fa3b3"/><rect x="14.2" y="13.2" width="4.6" height="1.2" fill="#7d8a96"/><circle cx="10.9" cy="10.6" r="2.1" fill="#f7931e"/><path d="M8.1 11.4 L10.2 13.5 L3.2 20.2 L0.2 21.4 L1.3 18.4 Z" fill="#3c3c3c"/><path d="M1.3 18.4 L3.2 20.2 L0.2 21.4 Z" fill="#e6e6e6"/></svg>
<div class="a" style="left:7.4px;top:673.38px;width:1281.1999999999998px;height:32.61px;background:#f1fbe6;border-bottom:1px solid #dee2e6"></div>
<div class="a" style="left:11.3px;top:682.62px;font-size:12.6px">562592</div>
<div class="a" style="left:64.4px;width:40px;text-align:center;top:680.54px;font-size:14px;font-weight:bold">2</div>
<div class="a" style="left:114.1px;top:682.37px;font-size:12.9px">Шевченківський (Бабушкінський), Центр, Короленко вул.</div>
<div class="a" style="left:687.3499999999999px;width:120px;text-align:center;top:682.62px;font-size:12.6px">9 / 12</div>
<div class="a" style="left:768.3px;width:120px;text-align:center;top:682.62px;font-size:12.6px">52 / - / 20</div>
<div class="a" style="left:866.8px;width:120px;text-align:center;top:682.62px;font-size:12.6px">135 000 $</div>
<div class="a" style="left:963.05px;width:120px;text-align:center;top:682.62px;font-size:12.6px">2 596 $</div>
<div class="a" style="left:1128.9px;width:100px;text-align:center;top:683.08px;font-size:11px">07-05-2024</div>
<svg style="left:1077.8px;top:677.39px" width="17.7" height="17.7" viewBox="0 0 17.7 17.7"><circle cx="8.85" cy="8.85" r="8.85" fill="#6c757d"/><circle cx="8.85" cy="5.4" r="1.75" fill="#fff"/><path d="M6.9 7.9 H9.9 V12.3 H10.9 V13.9 H6.8 V12.3 H7.8 V9.4 H6.9 Z" fill="#fff"/></svg>
<svg style="left:1117px;top:678.39px" width="16.2" height="16" viewBox="0 0 16.2 16"><rect width="16.2" height="16" rx="1.6" fill="#007bff"/><path d="M12.2 4.2 C13.3 8.6 10.2 12.3 4.6 12.1" fill="none" stroke="#fff" stroke-width="2.5" stroke-linecap="round"/><ellipse cx="11.5" cy="4.0" rx="2.4" ry="1.8" transform="rotate(25 11.5 4)" fill="#fff"/><ellipse cx="4.2" cy="11.6" rx="1.8" ry="2.3" transform="rotate(25 4.2 11.6)" fill="#fff"/></svg>
<svg style="left:1223.1px;top:680.49px" width="19.6" height="16" viewBox="0 0 19.6 16"><path d="M6.1 0.7 H13.5 L15.1 3.4 H17.6 C18.4 3.4 18.9 4 18.9 4.8 V13.8 C18.9 14.6 18.4 15.2 17.6 15.2 H2 C1.2 15.2 0.7 14.6 0.7 13.8 V4.8 C0.7 4 1.2 3.4 2 3.4 H4.5 Z" fill="#929292" stroke="#2a2a2a" stroke-width="1.1" stroke-linejoin="round"/><circle cx="9.8" cy="8.7" r="4.6" fill="#fff" stroke="#2a2a2a" stroke-width="1"/><circle cx="9.8" cy="8.7" r="3" fill="#fff" stroke="#444" stroke-width="0.75"/></svg>
<svg style="left:1260px;top:678.0899999999999px" width="22" height="22" viewBox="0 0 22 22"><path d="M4.9 0.8 H10.3 L12 2.6 V13 H4.9 Z" fill="#fff" stroke="#9c9c9c" stroke-width="1.3" stroke-linejoin="round"/><path d="M11.9 4 H16.7 L21.3 8.4 V16.8 C21.3 17.4 20.9 17.8 20.3 17.8 H12.9 C12.3 17.8 11.9 17.4 11.9 16.8 Z" fill="#fff" stroke="#9c9c9c" stroke-width="1.3" stroke-linejoin="round"/><rect x="7.2" y="4.9" width="2.8" height="1.1" fill="#a9b6bf"/><rect x="7.2" y="6.9" width="2.8" height="1.1" fill="#a9c4d6"/><rect x="7.2" y="8.9" width="2.8" height="1.1" fill="#a9b6bf"/><rect x="14.2" y="8.8" width="4.6" height="1.2" fill="#7d8a96"/><rect x="14.2" y="11" width="4.6" height="1.2" fill="#8fa3b3"/><rect x="14.2" y="13.2" width="4.6" height="1.2" fill="#7d8a96"/><circle cx="10.9" cy="10.6" r="2.1" fill="#f7931e"/><path d="M8.1 11.4 L10.2 13.5 L3.2 20.2 L0.2 21.4 L1.3 18.4 Z" fill="#3c3c3c"/><path d="M1.3 18.4 L3.2 20.2 L0.2 21.4 Z" fill="#e6e6e6"/></svg>
<div class="a" style="left:7.4px;top:705.99px;width:1281.1999999999998px;height:32.61px;background:#ffffff;border-bottom:1px solid #dee2e6"></div>
<div class="a" style="left:11.3px;top:715.23px;font-size:12.6px">490871</div>
<div class="a" style="left:64.4px;width:40px;text-align:center;top:713.15px;font-size:14px;font-weight:bold">4</div>
<div class="a" style="left:114.1px;top:714.98px;font-size:12.9px">Центральний (Кіровський), Центр, Короленко вул., 3</div>
<div class="a" style="left:687.3499999999999px;width:120px;text-align:center;top:715.23px;font-size:12.6px">9 / 12</div>
<div class="a" style="left:768.3px;width:120px;text-align:center;top:715.23px;font-size:12.6px">137 / - / 50</div>
<div class="a" style="left:866.8px;width:120px;text-align:center;top:715.23px;font-size:12.6px">222 500 $</div>
<div class="a" style="left:963.05px;width:120px;text-align:center;top:715.23px;font-size:12.6px">1 624 $</div>
<div class="a" style="left:1128.9px;width:100px;text-align:center;top:715.69px;font-size:11px">18-01-2024</div>
<svg style="left:1077.8px;top:710.00px" width="17.7" height="17.7" viewBox="0 0 17.7 17.7"><circle cx="8.85" cy="8.85" r="8.85" fill="#6c757d"/><circle cx="8.85" cy="5.4" r="1.75" fill="#fff"/><path d="M6.9 7.9 H9.9 V12.3 H10.9 V13.9 H6.8 V12.3 H7.8 V9.4 H6.9 Z" fill="#fff"/></svg>
<svg style="left:1117px;top:711.00px" width="16.2" height="16" viewBox="0 0 16.2 16"><rect width="16.2" height="16" rx="1.6" fill="#007bff"/><path d="M12.2 4.2 C13.3 8.6 10.2 12.3 4.6 12.1" fill="none" stroke="#fff" stroke-width="2.5" stroke-linecap="round"/><ellipse cx="11.5" cy="4.0" rx="2.4" ry="1.8" transform="rotate(25 11.5 4)" fill="#fff"/><ellipse cx="4.2" cy="11.6" rx="1.8" ry="2.3" transform="rotate(25 4.2 11.6)" fill="#fff"/></svg>
<svg style="left:1223.1px;top:713.1px" width="19.6" height="16" viewBox="0 0 19.6 16"><path d="M6.1 0.7 H13.5 L15.1 3.4 H17.6 C18.4 3.4 18.9 4 18.9 4.8 V13.8 C18.9 14.6 18.4 15.2 17.6 15.2 H2 C1.2 15.2 0.7 14.6 0.7 13.8 V4.8 C0.7 4 1.2 3.4 2 3.4 H4.5 Z" fill="#929292" stroke="#2a2a2a" stroke-width="1.1" stroke-linejoin="round"/><circle cx="9.8" cy="8.7" r="4.6" fill="#fff" stroke="#2a2a2a" stroke-width="1"/><circle cx="9.8" cy="8.7" r="3" fill="#fff" stroke="#444" stroke-width="0.75"/></svg>
<svg style="left:1260px;top:710.6999999999999px" width="22" height="22" viewBox="0 0 22 22"><path d="M4.9 0.8 H10.3 L12 2.6 V13 H4.9 Z" fill="#fff" stroke="#9c9c9c" stroke-width="1.3" stroke-linejoin="round"/><path d="M11.9 4 H16.7 L21.3 8.4 V16.8 C21.3 17.4 20.9 17.8 20.3 17.8 H12.9 C12.3 17.8 11.9 17.4 11.9 16.8 Z" fill="#fff" stroke="#9c9c9c" stroke-width="1.3" stroke-linejoin="round"/><rect x="7.2" y="4.9" width="2.8" height="1.1" fill="#a9b6bf"/><rect x="7.2" y="6.9" width="2.8" height="1.1" fill="#a9c4d6"/><rect x="7.2" y="8.9" width="2.8" height="1.1" fill="#a9b6bf"/><rect x="14.2" y="8.8" width="4.6" height="1.2" fill="#7d8a96"/><rect x="14.2" y="11" width="4.6" height="1.2" fill="#8fa3b3"/><rect x="14.2" y="13.2" width="4.6" height="1.2" fill="#7d8a96"/><circle cx="10.9" cy="10.6" r="2.1" fill="#f7931e"/><path d="M8.1 11.4 L10.2 13.5 L3.2 20.2 L0.2 21.4 L1.3 18.4 Z" fill="#3c3c3c"/><path d="M1.3 18.4 L3.2 20.2 L0.2 21.4 Z" fill="#e6e6e6"/></svg>
<div class="a" style="left:7.4px;top:738.60px;width:1281.1999999999998px;height:32.61px;background:#f1fbe6;border-bottom:1px solid #dee2e6"></div>
<div class="a" style="left:11.3px;top:747.84px;font-size:12.6px">445690</div>
<div class="a" style="left:64.4px;width:40px;text-align:center;top:745.76px;font-size:14px;font-weight:bold">3</div>
<div class="a" style="left:114.1px;top:747.59px;font-size:12.9px">Центральний (Кіровський), Центр, Короленко вул.</div>
<div class="a" style="left:687.3499999999999px;width:120px;text-align:center;top:747.84px;font-size:12.6px">9 / 12</div>
<div class="a" style="left:768.3px;width:120px;text-align:center;top:747.84px;font-size:12.6px">76 / - / 25</div>
<div class="a" style="left:866.8px;width:120px;text-align:center;top:747.84px;font-size:12.6px">125 565 $</div>
<div class="a" style="left:963.05px;width:120px;text-align:center;top:747.84px;font-size:12.6px">1 652 $</div>
<div class="a" style="left:1128.9px;width:100px;text-align:center;top:748.30px;font-size:11px">20-10-2023</div>
<svg style="left:1077.8px;top:742.61px" width="17.7" height="17.7" viewBox="0 0 17.7 17.7"><circle cx="8.85" cy="8.85" r="8.85" fill="#6c757d"/><circle cx="8.85" cy="5.4" r="1.75" fill="#fff"/><path d="M6.9 7.9 H9.9 V12.3 H10.9 V13.9 H6.8 V12.3 H7.8 V9.4 H6.9 Z" fill="#fff"/></svg>
<svg style="left:1117px;top:743.61px" width="16.2" height="16" viewBox="0 0 16.2 16"><rect width="16.2" height="16" rx="1.6" fill="#007bff"/><path d="M12.2 4.2 C13.3 8.6 10.2 12.3 4.6 12.1" fill="none" stroke="#fff" stroke-width="2.5" stroke-linecap="round"/><ellipse cx="11.5" cy="4.0" rx="2.4" ry="1.8" transform="rotate(25 11.5 4)" fill="#fff"/><ellipse cx="4.2" cy="11.6" rx="1.8" ry="2.3" transform="rotate(25 4.2 11.6)" fill="#fff"/></svg>
<svg style="left:1223.1px;top:745.71px" width="19.6" height="16" viewBox="0 0 19.6 16"><path d="M6.1 0.7 H13.5 L15.1 3.4 H17.6 C18.4 3.4 18.9 4 18.9 4.8 V13.8 C18.9 14.6 18.4 15.2 17.6 15.2 H2 C1.2 15.2 0.7 14.6 0.7 13.8 V4.8 C0.7 4 1.2 3.4 2 3.4 H4.5 Z" fill="#929292" stroke="#2a2a2a" stroke-width="1.1" stroke-linejoin="round"/><circle cx="9.8" cy="8.7" r="4.6" fill="#fff" stroke="#2a2a2a" stroke-width="1"/><circle cx="9.8" cy="8.7" r="3" fill="#fff" stroke="#444" stroke-width="0.75"/></svg>
<svg style="left:1260px;top:743.31px" width="22" height="22" viewBox="0 0 22 22"><path d="M4.9 0.8 H10.3 L12 2.6 V13 H4.9 Z" fill="#fff" stroke="#9c9c9c" stroke-width="1.3" stroke-linejoin="round"/><path d="M11.9 4 H16.7 L21.3 8.4 V16.8 C21.3 17.4 20.9 17.8 20.3 17.8 H12.9 C12.3 17.8 11.9 17.4 11.9 16.8 Z" fill="#fff" stroke="#9c9c9c" stroke-width="1.3" stroke-linejoin="round"/><rect x="7.2" y="4.9" width="2.8" height="1.1" fill="#a9b6bf"/><rect x="7.2" y="6.9" width="2.8" height="1.1" fill="#a9c4d6"/><rect x="7.2" y="8.9" width="2.8" height="1.1" fill="#a9b6bf"/><rect x="14.2" y="8.8" width="4.6" height="1.2" fill="#7d8a96"/><rect x="14.2" y="11" width="4.6" height="1.2" fill="#8fa3b3"/><rect x="14.2" y="13.2" width="4.6" height="1.2" fill="#7d8a96"/><circle cx="10.9" cy="10.6" r="2.1" fill="#f7931e"/><path d="M8.1 11.4 L10.2 13.5 L3.2 20.2 L0.2 21.4 L1.3 18.4 Z" fill="#3c3c3c"/><path d="M1.3 18.4 L3.2 20.2 L0.2 21.4 Z" fill="#e6e6e6"/></svg>
<div class="a" style="left:7.4px;top:771.21px;width:1281.1999999999998px;height:32.61px;background:#ffffff;border-bottom:1px solid #dee2e6"></div>
<div class="a" style="left:11.3px;top:780.45px;font-size:12.6px">445568</div>
<div class="a" style="left:64.4px;width:40px;text-align:center;top:778.37px;font-size:14px;font-weight:bold">3</div>
<div class="a" style="left:114.1px;top:780.20px;font-size:12.9px">Шевченківський (Бабушкінський), Центр, Короленко вул., 2</div>
<div class="a" style="left:687.3499999999999px;width:120px;text-align:center;top:780.45px;font-size:12.6px">9 / 12</div>
<div class="a" style="left:768.3px;width:120px;text-align:center;top:780.45px;font-size:12.6px">83 / - / 30</div>
<div class="a" style="left:866.8px;width:120px;text-align:center;top:780.45px;font-size:12.6px">133 000 $</div>
<div class="a" style="left:963.05px;width:120px;text-align:center;top:780.45px;font-size:12.6px">1 602 $</div>
<div class="a" style="left:1128.9px;width:100px;text-align:center;top:780.91px;font-size:11px">10-01-2024</div>
<svg style="left:1077.8px;top:775.22px" width="17.7" height="17.7" viewBox="0 0 17.7 17.7"><circle cx="8.85" cy="8.85" r="8.85" fill="#6c757d"/><circle cx="8.85" cy="5.4" r="1.75" fill="#fff"/><path d="M6.9 7.9 H9.9 V12.3 H10.9 V13.9 H6.8 V12.3 H7.8 V9.4 H6.9 Z" fill="#fff"/></svg>
<svg style="left:1117px;top:776.22px" width="16.2" height="16" viewBox="0 0 16.2 16"><rect width="16.2" height="16" rx="1.6" fill="#007bff"/><path d="M12.2 4.2 C13.3 8.6 10.2 12.3 4.6 12.1" fill="none" stroke="#fff" stroke-width="2.5" stroke-linecap="round"/><ellipse cx="11.5" cy="4.0" rx="2.4" ry="1.8" transform="rotate(25 11.5 4)" fill="#fff"/><ellipse cx="4.2" cy="11.6" rx="1.8" ry="2.3" transform="rotate(25 4.2 11.6)" fill="#fff"/></svg>
<svg style="left:1223.1px;top:778.3199999999999px" width="19.6" height="16" viewBox="0 0 19.6 16"><path d="M6.1 0.7 H13.5 L15.1 3.4 H17.6 C18.4 3.4 18.9 4 18.9 4.8 V13.8 C18.9 14.6 18.4 15.2 17.6 15.2 H2 C1.2 15.2 0.7 14.6 0.7 13.8 V4.8 C0.7 4 1.2 3.4 2 3.4 H4.5 Z" fill="#929292" stroke="#2a2a2a" stroke-width="1.1" stroke-linejoin="round"/><circle cx="9.8" cy="8.7" r="4.6" fill="#fff" stroke="#2a2a2a" stroke-width="1"/><circle cx="9.8" cy="8.7" r="3" fill="#fff" stroke="#444" stroke-width="0.75"/></svg>
<svg style="left:1260px;top:775.9199999999998px" width="22" height="22" viewBox="0 0 22 22"><path d="M4.9 0.8 H10.3 L12 2.6 V13 H4.9 Z" fill="#fff" stroke="#9c9c9c" stroke-width="1.3" stroke-linejoin="round"/><path d="M11.9 4 H16.7 L21.3 8.4 V16.8 C21.3 17.4 20.9 17.8 20.3 17.8 H12.9 C12.3 17.8 11.9 17.4 11.9 16.8 Z" fill="#fff" stroke="#9c9c9c" stroke-width="1.3" stroke-linejoin="round"/><rect x="7.2" y="4.9" width="2.8" height="1.1" fill="#a9b6bf"/><rect x="7.2" y="6.9" width="2.8" height="1.1" fill="#a9c4d6"/><rect x="7.2" y="8.9" width="2.8" height="1.1" fill="#a9b6bf"/><rect x="14.2" y="8.8" width="4.6" height="1.2" fill="#7d8a96"/><rect x="14.2" y="11" width="4.6" height="1.2" fill="#8fa3b3"/><rect x="14.2" y="13.2" width="4.6" height="1.2" fill="#7d8a96"/><circle cx="10.9" cy="10.6" r="2.1" fill="#f7931e"/><path d="M8.1 11.4 L10.2 13.5 L3.2 20.2 L0.2 21.4 L1.3 18.4 Z" fill="#3c3c3c"/><path d="M1.3 18.4 L3.2 20.2 L0.2 21.4 Z" fill="#e6e6e6"/></svg>
<div class="a" style="left:7.4px;top:803.82px;width:1281.1999999999998px;height:32.61px;background:#f1fbe6;border-bottom:1px solid #dee2e6"></div>
<div class="a" style="left:11.3px;top:813.06px;font-size:12.6px">555892</div>
<div class="a" style="left:64.4px;width:40px;text-align:center;top:810.98px;font-size:14px;font-weight:bold">3</div>
<div class="a" style="left:114.1px;top:812.81px;font-size:12.9px">Соборний (Жовтневий), Нагорный, Сімферопольська вул., 2</div>
<div class="a" style="left:687.3499999999999px;width:120px;text-align:center;top:813.06px;font-size:12.6px">17 / 24</div>
<div class="a" style="left:768.3px;width:120px;text-align:center;top:813.06px;font-size:12.6px">72 / - / 25</div>
<div class="a" style="left:866.8px;width:120px;text-align:center;top:813.06px;font-size:12.6px">105 000 $</div>
<div class="a" style="left:963.05px;width:120px;text-align:center;top:813.06px;font-size:12.6px">1 458 $</div>
<div class="a" style="left:1128.9px;width:100px;text-align:center;top:813.52px;font-size:11px">25-04-2024</div>
<svg style="left:1077.8px;top:807.83px" width="17.7" height="17.7" viewBox="0 0 17.7 17.7"><circle cx="8.85" cy="8.85" r="8.85" fill="#6c757d"/><circle cx="8.85" cy="5.4" r="1.75" fill="#fff"/><path d="M6.9 7.9 H9.9 V12.3 H10.9 V13.9 H6.8 V12.3 H7.8 V9.4 H6.9 Z" fill="#fff"/></svg>
<svg style="left:1117px;top:808.83px" width="16.2" height="16" viewBox="0 0 16.2 16"><rect width="16.2" height="16" rx="1.6" fill="#007bff"/><path d="M12.2 4.2 C13.3 8.6 10.2 12.3 4.6 12.1" fill="none" stroke="#fff" stroke-width="2.5" stroke-linecap="round"/><ellipse cx="11.5" cy="4.0" rx="2.4" ry="1.8" transform="rotate(25 11.5 4)" fill="#fff"/><ellipse cx="4.2" cy="11.6" rx="1.8" ry="2.3" transform="rotate(25 4.2 11.6)" fill="#fff"/></svg>
<svg style="left:1223.1px;top:810.9300000000001px" width="19.6" height="16" viewBox="0 0 19.6 16"><path d="M6.1 0.7 H13.5 L15.1 3.4 H17.6 C18.4 3.4 18.9 4 18.9 4.8 V13.8 C18.9 14.6 18.4 15.2 17.6 15.2 H2 C1.2 15.2 0.7 14.6 0.7 13.8 V4.8 C0.7 4 1.2 3.4 2 3.4 H4.5 Z" fill="#929292" stroke="#2a2a2a" stroke-width="1.1" stroke-linejoin="round"/><circle cx="9.8" cy="8.7" r="4.6" fill="#fff" stroke="#2a2a2a" stroke-width="1"/><circle cx="9.8" cy="8.7" r="3" fill="#fff" stroke="#444" stroke-width="0.75"/></svg>
<svg style="left:1260px;top:808.53px" width="22" height="22" viewBox="0 0 22 22"><path d="M4.9 0.8 H10.3 L12 2.6 V13 H4.9 Z" fill="#fff" stroke="#9c9c9c" stroke-width="1.3" stroke-linejoin="round"/><path d="M11.9 4 H16.7 L21.3 8.4 V16.8 C21.3 17.4 20.9 17.8 20.3 17.8 H12.9 C12.3 17.8 11.9 17.4 11.9 16.8 Z" fill="#fff" stroke="#9c9c9c" stroke-width="1.3" stroke-linejoin="round"/><rect x="7.2" y="4.9" width="2.8" height="1.1" fill="#a9b6bf"/><rect x="7.2" y="6.9" width="2.8" height="1.1" fill="#a9c4d6"/><rect x="7.2" y="8.9" width="2.8" height="1.1" fill="#a9b6bf"/><rect x="14.2" y="8.8" width="4.6" height="1.2" fill="#7d8a96"/><rect x="14.2" y="11" width="4.6" height="1.2" fill="#8fa3b3"/><rect x="14.2" y="13.2" width="4.6" height="1.2" fill="#7d8a96"/><circle cx="10.9" cy="10.6" r="2.1" fill="#f7931e"/><path d="M8.1 11.4 L10.2 13.5 L3.2 20.2 L0.2 21.4 L1.3 18.4 Z" fill="#3c3c3c"/><path d="M1.3 18.4 L3.2 20.2 L0.2 21.4 Z" fill="#e6e6e6"/></svg>
<div class="a" style="left:7.4px;top:836.43px;width:1281.1999999999998px;height:32.61px;background:#ffffff;border-bottom:1px solid #dee2e6"></div>
<div class="a" style="left:11.3px;top:845.67px;font-size:12.6px">265162</div>
<div class="a" style="left:64.4px;width:40px;text-align:center;top:843.59px;font-size:14px;font-weight:bold">3</div>
<div class="a" style="left:114.1px;top:845.42px;font-size:12.9px">Амур-Нижньодніпровський, Слобожанский пр-т, Дарницька вул., 19</div>
<div class="a" style="left:687.3499999999999px;width:120px;text-align:center;top:845.67px;font-size:12.6px">10 / 17</div>
<div class="a" style="left:768.3px;width:120px;text-align:center;top:845.67px;font-size:12.6px">111 / - / 20</div>
<div class="a" style="left:866.8px;width:120px;text-align:center;top:845.67px;font-size:12.6px">60 500 $</div>
<div class="a" style="left:963.05px;width:120px;text-align:center;top:845.67px;font-size:12.6px">545 $</div>
<div class="a" style="left:1128.9px;width:100px;text-align:center;top:846.13px;font-size:11px">22-07-2022</div>
<svg style="left:1077.8px;top:840.44px" width="17.7" height="17.7" viewBox="0 0 17.7 17.7"><circle cx="8.85" cy="8.85" r="8.85" fill="#6c757d"/><circle cx="8.85" cy="5.4" r="1.75" fill="#fff"/><path d="M6.9 7.9 H9.9 V12.3 H10.9 V13.9 H6.8 V12.3 H7.8 V9.4 H6.9 Z" fill="#fff"/></svg>
<svg style="left:1117px;top:841.44px" width="16.2" height="16" viewBox="0 0 16.2 16"><rect width="16.2" height="16" rx="1.6" fill="#007bff"/><path d="M12.2 4.2 C13.3 8.6 10.2 12.3 4.6 12.1" fill="none" stroke="#fff" stroke-width="2.5" stroke-linecap="round"/><ellipse cx="11.5" cy="4.0" rx="2.4" ry="1.8" transform="rotate(25 11.5 4)" fill="#fff"/><ellipse cx="4.2" cy="11.6" rx="1.8" ry="2.3" transform="rotate(25 4.2 11.6)" fill="#fff"/></svg>
<svg style="left:1223.1px;top:843.54px" width="19.6" height="16" viewBox="0 0 19.6 16"><path d="M6.1 0.7 H13.5 L15.1 3.4 H17.6 C18.4 3.4 18.9 4 18.9 4.8 V13.8 C18.9 14.6 18.4 15.2 17.6 15.2 H2 C1.2 15.2 0.7 14.6 0.7 13.8 V4.8 C0.7 4 1.2 3.4 2 3.4 H4.5 Z" fill="#929292" stroke="#2a2a2a" stroke-width="1.1" stroke-linejoin="round"/><circle cx="9.8" cy="8.7" r="4.6" fill="#fff" stroke="#2a2a2a" stroke-width="1"/><circle cx="9.8" cy="8.7" r="3" fill="#fff" stroke="#444" stroke-width="0.75"/></svg>
<svg style="left:1260px;top:841.1399999999999px" width="22" height="22" viewBox="0 0 22 22"><path d="M4.9 0.8 H10.3 L12 2.6 V13 H4.9 Z" fill="#fff" stroke="#9c9c9c" stroke-width="1.3" stroke-linejoin="round"/><path d="M11.9 4 H16.7 L21.3 8.4 V16.8 C21.3 17.4 20.9 17.8 20.3 17.8 H12.9 C12.3 17.8 11.9 17.4 11.9 16.8 Z" fill="#fff" stroke="#9c9c9c" stroke-width="1.3" stroke-linejoin="round"/><rect x="7.2" y="4.9" width="2.8" height="1.1" fill="#a9b6bf"/><rect x="7.2" y="6.9" width="2.8" height="1.1" fill="#a9c4d6"/><rect x="7.2" y="8.9" width="2.8" height="1.1" fill="#a9b6bf"/><rect x="14.2" y="8.8" width="4.6" height="1.2" fill="#7d8a96"/><rect x="14.2" y="11" width="4.6" height="1.2" fill="#8fa3b3"/><rect x="14.2" y="13.2" width="4.6" height="1.2" fill="#7d8a96"/><circle cx="10.9" cy="10.6" r="2.1" fill="#f7931e"/><path d="M8.1 11.4 L10.2 13.5 L3.2 20.2 L0.2 21.4 L1.3 18.4 Z" fill="#3c3c3c"/><path d="M1.3 18.4 L3.2 20.2 L0.2 21.4 Z" fill="#e6e6e6"/></svg>
<div class="a" style="left:1249.5px;top:349.5px;width:41.9px;height:494.6px;border:5px solid #ff2200"></div>
</body></html>
